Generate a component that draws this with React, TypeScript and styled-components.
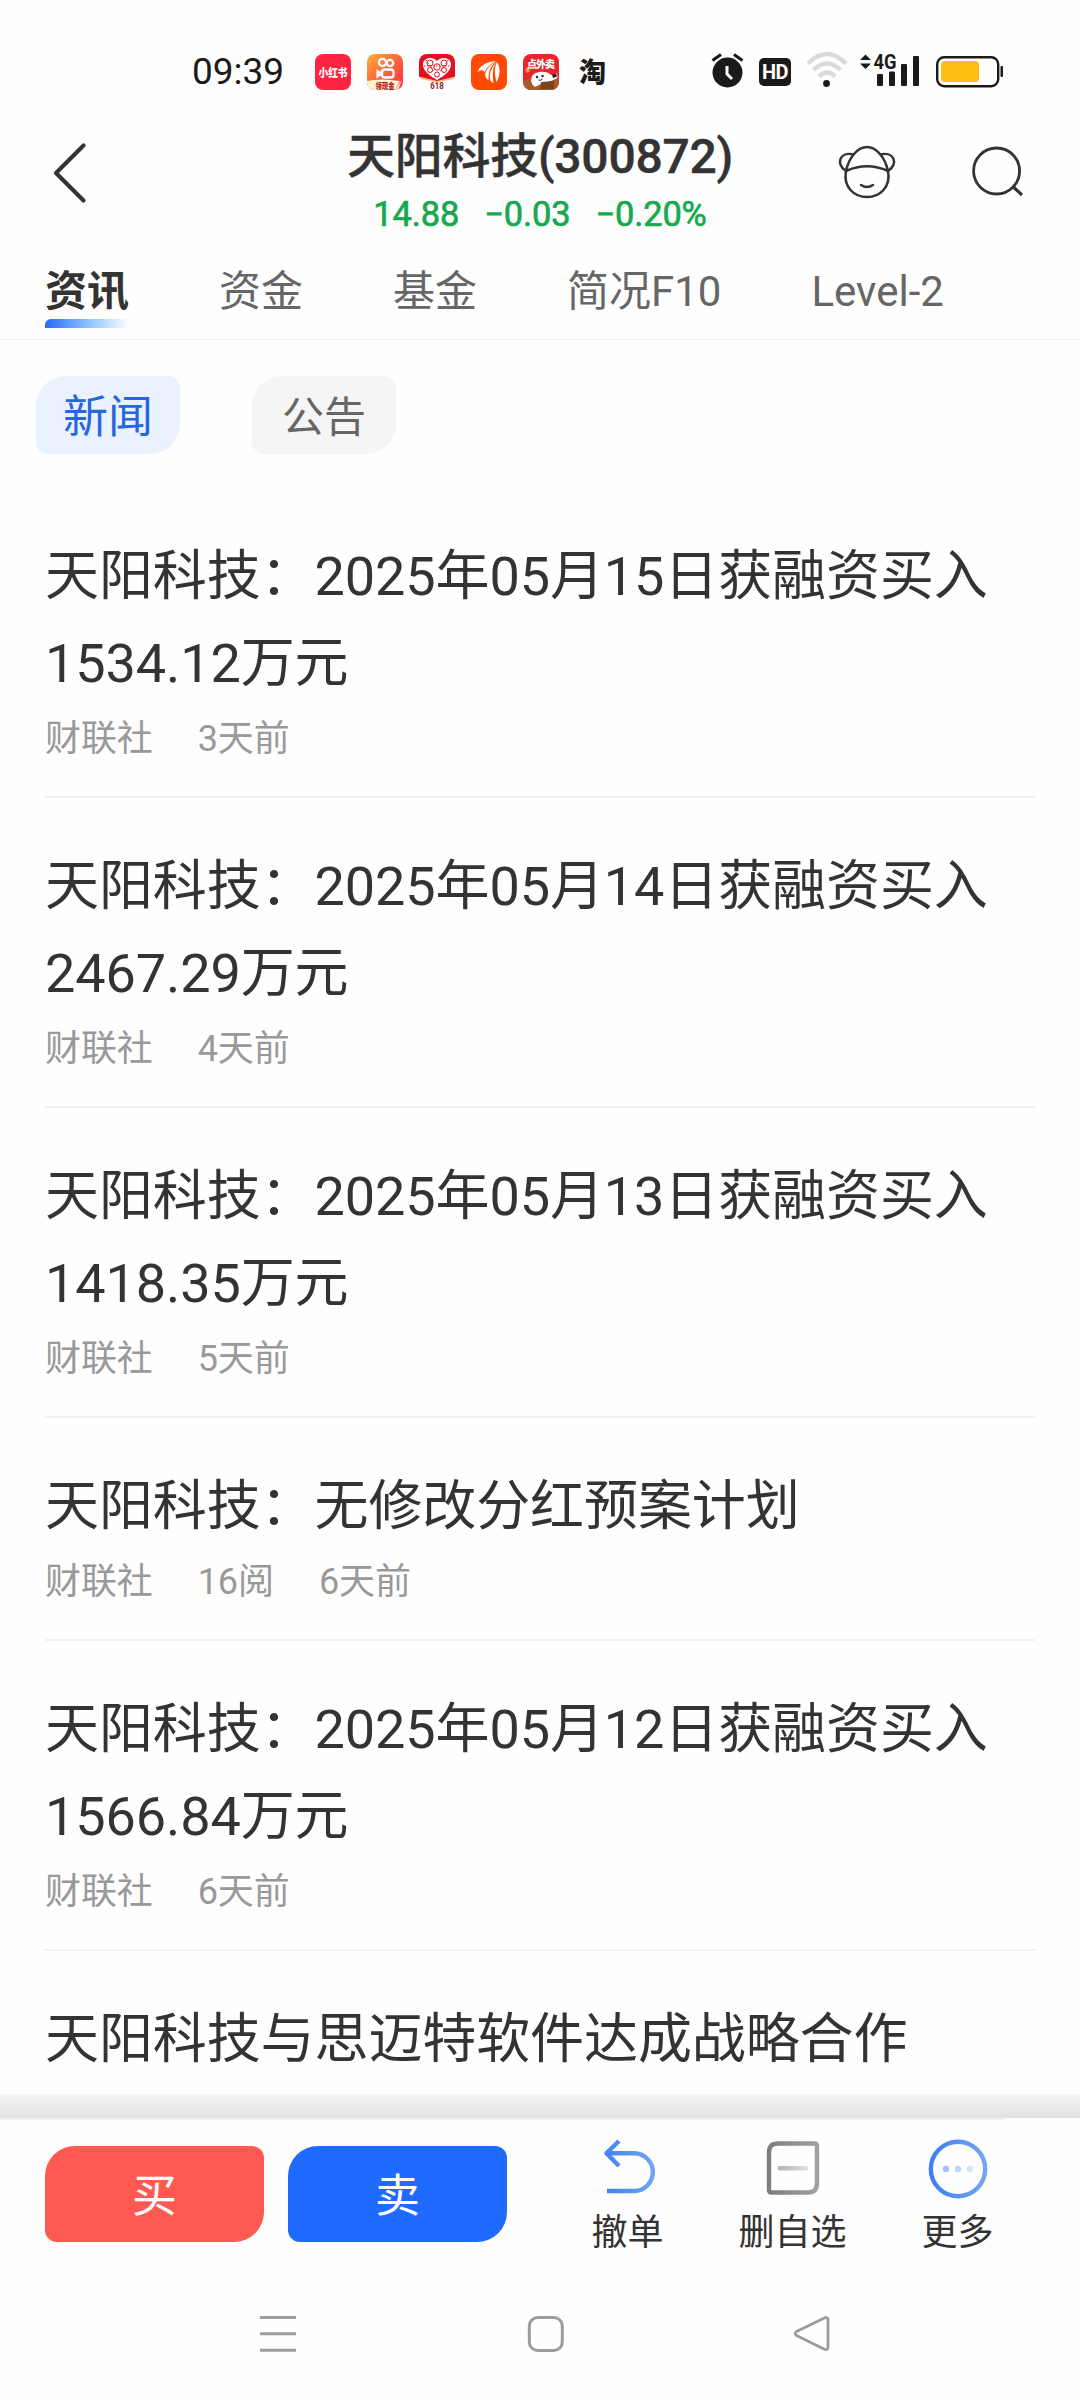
import React from 'react';
import styled, { createGlobalStyle } from 'styled-components';

const GlobalStyle = createGlobalStyle`
  html, body { margin: 0; padding: 0; background: #fefefe; }
  body { font-family: Roboto, 'Noto Sans CJK SC', sans-serif; color: #333; }
  * { box-sizing: border-box; }
  svg { display: block; flex: none; overflow: visible; }
`;

const Screen = styled.div`
  width: 1080px;
  height: 2400px;
  display: flex;
  flex-direction: column;
  overflow: hidden;
  background: #fefefe;
`;

/* status bar */
const StatusBar = styled.div`
  height: 108px;
  flex: none;
  display: flex;
  align-items: flex-start;
  padding: 35px 77px 0 192px;
`;
const Clock = styled.div`
  width: 123px;
  font-size: 37px;
  line-height: 73px;
  height: 73px;
  color: #1a1a1a;
`;
const AppIcons = styled.div`
  display: flex;
  gap: 16px;
  margin-top: 19px;
`;
const SystemIcons = styled.div`
  display: flex;
  margin-left: auto;
  margin-top: 17px;
`;

/* header */
const Header = styled.header`
  height: 146px;
  flex: none;
  display: grid;
  grid-template-columns: 300px 480px 300px;
`;
const HeaderSide = styled.div<{ $end?: boolean }>`
  display: flex;
  align-items: flex-start;
  padding: ${p => (p.$end ? '36px 0 0 56px' : '33px 0 0 50px')};
  gap: 72px;
`;
const Heading = styled.div`
  display: flex;
  flex-direction: column;
  align-items: center;
  padding-top: 19px;
  white-space: nowrap;
`;
const Title = styled.h1`
  margin: 0;
  font-size: 48px;
  line-height: 60px;
  font-weight: 500;
  letter-spacing: -0.25px;
  -webkit-text-stroke: 0.4px #333;
`;
const Quote = styled.div`
  display: flex;
  gap: 25px;
  margin-top: 5px;
  font-size: 34.4px;
  line-height: 44px;
  color: #18a850;
  -webkit-text-stroke: 0.7px #18a850;
`;
const Figure = styled.span`
  letter-spacing: -0.1px;
`;

/* tabs */
const Tabs = styled.nav`
  height: 86px;
  flex: none;
  display: flex;
  gap: 90px;
  padding: 7px 45px 0;
  border-bottom: 1px solid #eee;
`;
const Tab = styled.div<{ $active?: boolean }>`
  font-size: 42px;
  line-height: 61px;
  font-weight: ${p => (p.$active ? 700 : 400)};
  color: ${p => (p.$active ? '#333' : '#666')};
  white-space: nowrap;
  &::after {
    content: '';
    display: ${p => (p.$active ? 'block' : 'none')};
    height: 9px;
    margin-top: -3px;
    border-radius: 6px 0 0 0;
    background: linear-gradient(90deg, #256bf8, #93c8ff 55%, #fefefe);
  }
`;

/* filter chips */
const Chips = styled.div`
  height: 148px;
  flex: none;
  display: flex;
  gap: 72px;
  padding: 36px 36px 0;
`;
const Chip = styled.div<{ $active?: boolean }>`
  width: 144px;
  height: 78px;
  border-radius: 30px 12px 30px 12px;
  text-align: center;
  line-height: 83px;
  font-size: ${p => (p.$active ? 45 : 42)}px;
  color: ${p => (p.$active ? '#2667dd' : '#666')};
  background: ${p => (p.$active ? '#ebf2ff' : '#f5f5f5')};
`;

/* news */
const News = styled.main`
  flex: 1;
  min-height: 0;
  overflow: hidden;
  padding: 0 45px;
`;
const Article = styled.article`
  padding: 45px 0 32px;
  border-bottom: 2px solid #f1f1f1;
`;
const Headline = styled.div`
  font-size: 54px;
  line-height: 87px;
  letter-spacing: -0.1px;
`;
const Meta = styled.div`
  display: flex;
  gap: 45px;
  margin-top: 7px;
  font-size: 36px;
  line-height: 50px;
  letter-spacing: -0.1px;
  color: #999;
`;

/* trading bar */
const Shade = styled.div`
  height: 24px;
  flex: none;
  background: linear-gradient(#f5f6f8, #ebebeb 60%, #e1e1e1);
`;
const Rule = styled.div`
  width: 1005px;
  height: 2px;
  flex: none;
  background: #f1f1f1;
`;
const TradeBar = styled.div`
  height: 150px;
  flex: none;
  display: flex;
  padding: 0 0 0 45px;
`;
const TradeButton = styled.div<{ $tone: string }>`
  width: 219px;
  height: 96px;
  margin: 26px 24px 0 0;
  border-radius: 30px 12px 30px 12px;
  background: ${p => p.$tone};
  color: #fff;
  font-size: 45px;
  line-height: 101px;
  text-align: center;
`;
const Tools = styled.div`
  display: flex;
  margin-left: 14px;
`;
const Tool = styled.div`
  width: 165px;
  display: flex;
  flex-direction: column;
  align-items: center;
  padding-top: 16px;
  font-size: 36px;
  line-height: 48px;
  gap: 9px;
`;

/* system navigation */
const SystemNav = styled.div`
  height: 130px;
  flex: none;
  display: flex;
  align-items: flex-start;
  padding: 44px 248px 0 258px;
  justify-content: space-between;
`;

const Alarm = () => (
  <svg width="32" height="36" viewBox="0 0 32 36">
    <circle cx="15.500" cy="20.500" r="15" fill="#1a1a1a" />
    <path d="M0.500 8.500 9 2.500M30.500 8.500 22 2.500" stroke="#1a1a1a" strokeWidth="3.200" />
    <path d="M15 14v8l5 5" stroke="#fff" strokeWidth="3" fill="none" />
  </svg>
);
const HdBadge = styled.div`
  width: 32px;
  height: 28px;
  margin: 6px 0 0 15px;
  border-radius: 5px;
  background: #1a1a1a;
  color: #fff;
  font: 700 20px/29px Roboto, sans-serif;
  text-align: center;
  letter-spacing: -0.5px;
`;
const WifiSvg = styled.svg`
  margin-left: 15px;
`;
const Wifi = () => (
  <WifiSvg width="42" height="36" viewBox="0 0 42 36">
    <g fill="none" stroke="#dadada" strokeWidth="4.400">
      <path d="M2 11.500Q21-7.500 40 11.500" />
      <path d="M7.500 18Q21 5 34.500 18" />
      <path d="M13 24.500Q21 16.500 29 24.500" />
    </g>
    <circle cx="20.500" cy="31.500" r="3.400" fill="#1a1a1a" />
  </WifiSvg>
);
const SignalSvg = styled.svg`
  margin-left: 12px;
`;
const Signal = () => (
  <SignalSvg width="61" height="36" viewBox="0 0 61 36">
    <path d="M0 8 5.500 2.500 11 8zM0 11.500h11L5.500 17z" fill="#1a1a1a" />
    <g fill="#1a1a1a">
      <rect x="17" y="22" width="6" height="12" rx="1" />
      <rect x="29" y="19.500" width="6" height="14.500" rx="1" />
      <rect x="41" y="12" width="6" height="22" rx="1" />
      <rect x="53" y="4" width="6" height="30" rx="1" />
    </g>
    <text x="13.500" y="17.300" fontSize="20" fontWeight="700" fontFamily="Roboto" textLength="23" lengthAdjust="spacingAndGlyphs" fill="#1a1a1a">4G</text>
  </SignalSvg>
);
const BatterySvg = styled.svg`
  margin-left: 15px;
`;
const Battery = () => (
  <BatterySvg width="67" height="36" viewBox="0 0 67 36">
    <rect x="1.200" y="5.200" width="61" height="29" rx="7" fill="none" stroke="#1a1a1a" strokeWidth="2.400" />
    <rect x="5" y="9" width="38" height="21" rx="4" fill="#ffbc12" />
    <rect x="64.500" y="14" width="2.500" height="11" rx="1" fill="#1a1a1a" />
  </BatterySvg>
);

const iconText = { fontFamily: "'Noto Sans CJK SC', sans-serif", fontWeight: 900 } as const;

const RedNote = () => (
  <svg width="36" height="36" viewBox="0 0 36 36">
    <rect width="36" height="36" rx="8" fill="#ff2442" />
    <text x="18" y="22.500" fontSize="11.500" textLength="29" lengthAdjust="spacingAndGlyphs" textAnchor="middle" fill="#fff" {...iconText}>小红书</text>
  </svg>
);
const Video = () => (
  <svg width="36" height="36" viewBox="0 0 36 36">
    <defs>
      <linearGradient id="video" x1="0" y1="0" x2="1" y2="1">
        <stop offset="0" stopColor="#ffb03a" /><stop offset=".45" stopColor="#ff6a3c" /><stop offset="1" stopColor="#f92c44" />
      </linearGradient>
      <clipPath id="tile"><rect width="36" height="36" rx="8" /></clipPath>
    </defs>
    <g clipPath="url(#tile)">
      <rect width="36" height="36" fill="url(#video)" />
      <path d="M0 27Q14 24 33 27L28 36H0z" fill="#fff0cf" />
      <path d="M28 36 35 26 31 36z" fill="#fff0cf" />
    </g>
    <g fill="none" stroke="#fff" strokeWidth="2.300">
      <circle cx="15.500" cy="8.500" r="3.600" /><circle cx="23" cy="9" r="3.200" />
      <rect x="15" y="15.500" width="11.500" height="8" rx="2.800" />
      <path d="M14.500 19.500 10.500 17v5.500z" />
    </g>
    <text x="18" y="34.500" fontSize="8.500" textLength="19" lengthAdjust="spacingAndGlyphs" textAnchor="middle" fill="#b3261e" {...iconText}>领现金</text>
  </svg>
);
const Sale = () => (
  <svg width="36" height="36" viewBox="0 0 36 36">
    <path d="M8 0h20a8 8 0 0 1 8 8v15L18 27.500 0 23V8a8 8 0 0 1 8-8z" fill="#e5101f" />
    <path d="M0 22.500 18 27 36 22.500 34.500 25 18 28.500 1.500 25z" fill="#ffb98a" />
    <path d="M18 26C9 21 4 16 4 10.500 4 3 14 2 18 7 22 2 32 3 32 10.500 32 16 27 21 18 26z" fill="#fff" />
    <g fill="none" stroke="#e5101f" strokeWidth="1">
      <circle cx="11" cy="9" r="3" /><circle cx="25" cy="9" r="3" /><circle cx="18" cy="13" r="3.200" />
      <circle cx="11" cy="16" r="2.500" /><circle cx="25" cy="16" r="2.500" /><circle cx="18" cy="20.500" r="2.500" />
      <path d="M7 6l8 12M29 6l-8 12M5 12h26" strokeDasharray="1.500 1.500" />
    </g>
    <text x="18" y="35" fontSize="9" fontFamily="Roboto" fontWeight="700" textLength="13.500" lengthAdjust="spacingAndGlyphs" textAnchor="middle" fill="#9b1c22">618</text>
  </svg>
);
const Wing = () => (
  <svg width="36" height="36" viewBox="0 0 36 36">
    <rect width="36" height="36" rx="8" fill="#ff4a05" />
    <g fill="#fff">
      <path d="M6.500 18.500C8 12 15 8 25 7 19 10 16.500 13 13.500 18 11.500 15.500 9 16 6.500 18.500z" />
      <path d="M25 7.500C19.500 12 17.500 17 17.500 26 15 25 14 22.500 14.300 19.500 16 14 20 10 25 7.500z" />
      <path d="M25.500 8C21.500 14 21 20 22.500 29 19.500 28 18.500 26 19 20 20 15 22.500 11 25.500 8z" />
      <path d="M26 8C29 13 30 20 25.500 28 23.500 20 23 14 26 8z" />
    </g>
  </svg>
);
const Takeaway = () => (
  <svg width="36" height="36" viewBox="0 0 36 36">
    <g clipPath="url(#tile)">
      <rect width="36" height="36" fill="#e8262a" />
      <path d="M0 27 9 24 36 25V36H0z" fill="#a65c2c" />
      <path d="M8 27Q8 19 16 18Q24 17 28 21L34 19.500 34.500 24 28 27 18 30 12 33Q9 31 8 27z" fill="#fff" />
      <path d="M2 15l4-2 1 4-3 2z" fill="#f7a13c" />
      <path d="M18 28l13-1v8H17z" fill="#7a421e" />
      <path d="M29 20.500l4-1 1 3-4 1.500z" fill="#222" />
    </g>
    <circle cx="14" cy="23" r="1.200" fill="#222" /><circle cx="19.500" cy="22" r="1.200" fill="#222" />
    <path d="M15.500 26q2 1 4-1" stroke="#222" fill="none" />
    <text x="18" y="13.500" fontSize="10" textLength="28" textAnchor="middle" fill="#fff" {...iconText}>点外卖</text>
  </svg>
);
const Tao = styled.span`
  width: 28px;
  margin-left: 4px;
  font: 900 27px/33px 'Noto Sans CJK SC', sans-serif;
  color: #1a1a1a;
`;

const Back = () => (
  <svg width="40" height="64" viewBox="0 0 40 64">
    <path d="M33.500 4.500 6 32l27.500 27.500" fill="none" stroke="#333" strokeWidth="4.200" strokeLinecap="round" strokeLinejoin="round" />
  </svg>
);
const Assistant = () => (
  <svg width="60" height="58" viewBox="0 0 60 58">
    <g fill="none" stroke="#333" strokeWidth="2.500" strokeLinecap="round" strokeLinejoin="round">
      <path d="M10 27C13 13 22 3 31 3S49 13 52 27Q31 17.500 10 27z" />
      <path d="M10 27C7 43 18 53 31 53S55 43 52 27" />
      <path d="M10 27C-1 20 4 7 17.500 10.500M52 27C63 20 58 7 44.500 10.500" />
      <path d="M25 41q6 4 12 0" />
    </g>
  </svg>
);
const Search = () => (
  <svg width="60" height="58" viewBox="0 0 60 58">
    <g fill="none" stroke="#333" strokeWidth="2.800">
      <circle cx="28.600" cy="27" r="23" />
      <path d="M45.500 43 54 51" strokeWidth="3.200" />
    </g>
  </svg>
);

const Gradients = () => (
  <defs>
    <linearGradient id="blue" gradientUnits="userSpaceOnUse" x1="4" y1="0" x2="58" y2="0">
      <stop offset="0" stopColor="#427ff2" /><stop offset="1" stopColor="#70a6f2" />
    </linearGradient>
    <linearGradient id="gray" gradientUnits="userSpaceOnUse" x1="4" y1="0" x2="58" y2="0">
      <stop offset="0" stopColor="#7d7d7d" /><stop offset="1" stopColor="#a2a2a2" />
    </linearGradient>
    <linearGradient id="dash" gradientUnits="userSpaceOnUse" x1="15" y1="0" x2="45" y2="0">
      <stop offset="0" stopColor="#b3b3b3" /><stop offset="1" stopColor="#e2e2e2" />
    </linearGradient>
  </defs>
);
const Undo = () => (
  <svg width="60" height="64" viewBox="0 0 60 64">
    <Gradients />
    <g fill="none" stroke="url(#blue)" strokeWidth="4.400" strokeLinejoin="round">
      <path d="M21 5 8.500 17.200 21 30" />
      <path d="M8.500 17.200H36a18.900 18.900 0 0 1 0 37.800H9" />
    </g>
  </svg>
);
const Remove = () => (
  <svg width="60" height="64" viewBox="0 0 60 64">
    <path d="M15 7.500H51.500Q54 7.500 54 10V47.500Q54 56.500 45 56.500H8.500Q6 56.500 6 54V16.500Q6 7.500 15 7.500z" fill="none" stroke="url(#gray)" strokeWidth="4.400" />
    <rect x="15" y="30" width="30" height="4.400" rx="1" fill="url(#dash)" />
  </svg>
);
const More = () => (
  <svg width="60" height="64" viewBox="0 0 60 64">
    <circle cx="30" cy="33" r="27.200" fill="none" stroke="url(#blue)" strokeWidth="4.400" />
    <circle cx="18" cy="33" r="3.200" fill="#a5c0f3" />
    <circle cx="30" cy="33" r="3.200" fill="#bfd4f6" />
    <circle cx="42" cy="33" r="3.200" fill="#d6e5fb" />
  </svg>
);

const tabs = ['资讯', '资金', '基金', '简况F10', 'Level-2'];
const quote = ['14.88', '−0.03', '−0.20%'];
const news = [
  { title: '天阳科技：2025年05月15日获融资买入1534.12万元', meta: ['财联社', '3天前'] },
  { title: '天阳科技：2025年05月14日获融资买入2467.29万元', meta: ['财联社', '4天前'] },
  { title: '天阳科技：2025年05月13日获融资买入1418.35万元', meta: ['财联社', '5天前'] },
  { title: '天阳科技：无修改分红预案计划', meta: ['财联社', '16阅', '6天前'] },
  { title: '天阳科技：2025年05月12日获融资买入1566.84万元', meta: ['财联社', '6天前'] },
  { title: '天阳科技与思迈特软件达成战略合作', meta: [] },
];
const tools = [
  { label: '撤单', Icon: Undo },
  { label: '删自选', Icon: Remove },
  { label: '更多', Icon: More },
];

export default function App() {
  return (
    <Screen lang="zh-CN">
      <GlobalStyle />
      <StatusBar>
        <Clock>09:39</Clock>
        <AppIcons>
          <RedNote /><Video /><Sale /><Wing /><Takeaway /><Tao>淘</Tao>
        </AppIcons>
        <SystemIcons>
          <Alarm /><HdBadge>HD</HdBadge><Wifi /><Signal /><Battery />
        </SystemIcons>
      </StatusBar>
      <Header>
        <HeaderSide><Back /></HeaderSide>
        <Heading>
          <Title>天阳科技(300872)</Title>
          <Quote>{quote.map(q => <Figure key={q}>{q}</Figure>)}</Quote>
        </Heading>
        <HeaderSide $end><Assistant /><Search /></HeaderSide>
      </Header>
      <Tabs>
        {tabs.map((t, i) => <Tab key={t} $active={i === 0}>{t}</Tab>)}
      </Tabs>
      <Chips>
        <Chip $active>新闻</Chip>
        <Chip>公告</Chip>
      </Chips>
      <News>
        {news.map(n => (
          <Article key={n.title}>
            <Headline>{n.title}</Headline>
            <Meta>{n.meta.map(m => <span key={m}>{m}</span>)}</Meta>
          </Article>
        ))}
      </News>
      <Shade />
      <Rule />
      <TradeBar>
        <TradeButton $tone="#ff5a52">买</TradeButton>
        <TradeButton $tone="#1f6bff">卖</TradeButton>
        <Tools>
          {tools.map(({ label, Icon }) => <Tool key={label}><Icon />{label}</Tool>)}
        </Tools>
      </TradeBar>
      <SystemNav>
        <svg width="40" height="40" viewBox="0 0 40 40" stroke="#9b9b9b" strokeWidth="3">
          <path d="M2 3.600H38M2 19.800H38M2 36.200H38" />
        </svg>
        <svg width="40" height="40" viewBox="0 0 40 40" fill="none" stroke="#9b9b9b" strokeWidth="3">
          <rect x="4.300" y="3.500" width="33" height="33" rx="8.500" />
        </svg>
        <svg width="40" height="40" viewBox="0 0 40 40" fill="none" stroke="#9b9b9b" strokeWidth="2.800" strokeLinejoin="round">
          <path d="M4.500 17.500 33 3.700Q35.500 3 36 5.500V33.500Q35.500 36 33 35.500L4.500 21.500Q2 19.500 4.500 17.500z" />
        </svg>
      </SystemNav>
    </Screen>
  );
}
